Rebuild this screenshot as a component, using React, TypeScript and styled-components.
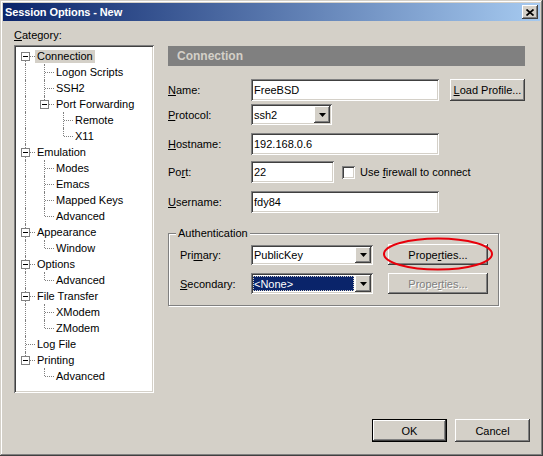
import React from "react"
import styled, { createGlobalStyle, css } from "styled-components"

const GlobalStyle = createGlobalStyle`
  html, body {
    margin: 0;
    padding: 0;
    background: #d4d0c8;
  }
  body {
    font-family: "Liberation Sans", Arial, sans-serif;
    font-size: 11px;
    color: #000;
  }
  * {
    box-sizing: border-box;
  }
`

// classic bevels
const raised = css`
  box-shadow: inset -1px -1px #404040, inset 1px 1px #ffffff, inset -2px -2px #808080,
    inset 2px 2px #d4d0c8;
`
const sunken = css`
  box-shadow: inset 1px 1px #808080, inset -1px -1px #ffffff, inset 2px 2px #404040,
    inset -2px -2px #d4d0c8;
`

const Window = styled.div`
  width: 543px;
  height: 456px;
  padding: 3px;
  background: #d4d0c8;
  display: flex;
  flex-direction: column;
  box-shadow: inset -1px -1px #404040, inset 1px 1px #d4d0c8, inset -2px -2px #808080,
    inset 2px 2px #ffffff;
`

const TitleBar = styled.div`
  height: 18px;
  display: flex;
  align-items: center;
  justify-content: space-between;
  padding: 0 2px 0 2px;
  background: linear-gradient(to right, #0a246a, #a6caf0);
`

const Title = styled.span`
  color: #fff;
  font-weight: 700;
  font-size: 11px;
  letter-spacing: -0.1px;
`

const CloseButton = styled.div`
  width: 16px;
  height: 14px;
  background: #d4d0c8;
  display: flex;
  align-items: center;
  justify-content: center;
  ${raised};
`

const Body = styled.div`
  flex: 1;
  display: flex;
  flex-direction: column;
  padding: 8px 10px 0 11px;
`

const Main = styled.div`
  display: flex;
  gap: 14px;
  height: 364px;
`

const LeftColumn = styled.div`
  width: 140px;
  display: flex;
  flex-direction: column;
`

const CategoryLabel = styled.div`
  height: 13px;
  line-height: 13px;
  margin-bottom: 3px;
`

const Key = styled.span`
  text-decoration: underline;
`

const TreeBox = styled.div`
  height: 348px;
  background: #fff;
  padding: 3px 0 0 2px;
  ${sunken};
`

const TreeRow = styled.div`
  display: flex;
  align-items: center;
  height: 16px;
`

const Guide = styled.div<{ $line: boolean }>`
  width: 19px;
  height: 16px;
  position: relative;
  flex: none;
  ${(p) =>
    p.$line &&
    css`
      &::before {
        content: "";
        position: absolute;
        left: 9px;
        top: 0;
        bottom: 0;
        border-left: 1px dotted #808080;
      }
    `}
`

const Connector = styled.div<{ $up: boolean; $down: boolean }>`
  width: 19px;
  height: 16px;
  position: relative;
  flex: none;
  &::before {
    content: "";
    position: absolute;
    left: 9px;
    top: ${(p) => (p.$up ? "0" : "8px")};
    bottom: ${(p) => (p.$down ? "0" : "8px")};
    border-left: 1px dotted #808080;
  }
  &::after {
    content: "";
    position: absolute;
    left: 10px;
    top: 8px;
    width: 9px;
    border-top: 1px dotted #808080;
  }
`

const Expander = styled.div`
  position: absolute;
  left: 5px;
  top: 4px;
  width: 9px;
  height: 9px;
  border: 1px solid #808080;
  background: #fff;
  z-index: 1;
  &::after {
    content: "";
    position: absolute;
    left: 1px;
    top: 3px;
    width: 5px;
    border-top: 1px solid #000;
  }
`

const NodeLabel = styled.span<{ $selected?: boolean }>`
  height: 13px;
  line-height: 13px;
  padding: 0 2px;
  white-space: nowrap;
  background: ${(p) => (p.$selected ? "#d4d0c8" : "transparent")};
`

const RightColumn = styled.div`
  width: 357px;
  padding-top: 17px;
  display: flex;
  flex-direction: column;
`

const PanelHeader = styled.div`
  height: 20px;
  background: #808080;
  color: #d4d0c8;
  font-weight: 700;
  font-size: 12px;
  padding-left: 9px;
  display: flex;
  align-items: center;
`

const FormRow = styled.div<{ $top: number }>`
  display: flex;
  align-items: center;
  margin-top: ${(p) => p.$top}px;
`

const FieldLabel = styled.div<{ $w: number }>`
  width: ${(p) => p.$w}px;
  flex: none;
`

const TextField = styled.div<{ $w: number }>`
  width: ${(p) => p.$w}px;
  height: 22px;
  background: #fff;
  padding-left: 3px;
  display: flex;
  align-items: center;
  ${sunken};
`

const Combo = styled.div<{ $w: number; $h: number }>`
  width: ${(p) => p.$w}px;
  height: ${(p) => p.$h}px;
  background: #fff;
  padding: 2px;
  display: flex;
  ${sunken};
`

const ComboText = styled.div<{ $selected?: boolean }>`
  flex: 1;
  display: flex;
  align-items: center;
  padding-left: 1px;
  margin: 1px 1px 1px 0;
  ${(p) =>
    p.$selected &&
    css`
      background: #0a246a;
      color: #fff;
      outline: 1px dotted #d4d0c8;
      outline-offset: -1px;
    `}
`

const ComboArrow = styled.div`
  width: 16px;
  flex: none;
  background: #d4d0c8;
  display: flex;
  align-items: center;
  justify-content: center;
  ${raised};
`

const Button = styled.div<{ $w: number; $h: number; $default?: boolean; $disabled?: boolean }>`
  position: relative;
  width: ${(p) => p.$w}px;
  height: ${(p) => p.$h}px;
  flex: none;
  background: #d4d0c8;
  display: flex;
  align-items: center;
  justify-content: center;
  ${(p) =>
    p.$default
      ? css`
          border: 1px solid #000;
          box-shadow: inset -1px -1px #404040, inset 1px 1px #ffffff, inset -2px -2px #808080;
        `
      : raised};
  ${(p) =>
    p.$disabled &&
    css`
      color: #808080;
      text-shadow: 1px 1px 0 #fff;
    `}
`

const Checkbox = styled.div`
  width: 13px;
  height: 13px;
  flex: none;
  background: #fff;
  margin: 0 5px 0 8px;
  ${sunken};
`

const Group = styled.div`
  position: relative;
  width: 331px;
  height: 73px;
  margin-top: 20px;
  padding: 10px 0 0 11px;
  border: 1px solid #808080;
  box-shadow: 1px 1px 0 #fff, inset 1px 1px 0 #fff;
`

const Legend = styled.span`
  position: absolute;
  left: 7px;
  top: -7px;
  padding: 0 2px;
  line-height: 13px;
  background: #d4d0c8;
`

const Highlight = styled.svg`
  position: absolute;
  left: -6px;
  top: -7px;
  pointer-events: none;
`

const Footer = styled.div`
  display: flex;
  justify-content: flex-end;
  gap: 8px;
  margin-top: 26px;
`

type TreeNode = { label: string; selected?: boolean; children?: TreeNode[] }

const tree: TreeNode[] = [
  {
    label: "Connection",
    selected: true,
    children: [
      { label: "Logon Scripts" },
      { label: "SSH2" },
      { label: "Port Forwarding", children: [{ label: "Remote" }, { label: "X11" }] },
    ],
  },
  {
    label: "Emulation",
    children: [{ label: "Modes" }, { label: "Emacs" }, { label: "Mapped Keys" }, { label: "Advanced" }],
  },
  { label: "Appearance", children: [{ label: "Window" }] },
  { label: "Options", children: [{ label: "Advanced" }] },
  { label: "File Transfer", children: [{ label: "XModem" }, { label: "ZModem" }] },
  { label: "Log File" },
  { label: "Printing", children: [{ label: "Advanced" }] },
]

type FlatNode = {
  label: string
  selected?: boolean
  guides: boolean[]
  first: boolean
  last: boolean
  expandable: boolean
}

const flatten = (nodes: TreeNode[], depth: number, guides: boolean[], out: FlatNode[]) => {
  nodes.forEach((n, i) => {
    const last = i === nodes.length - 1
    out.push({
      label: n.label,
      selected: n.selected,
      guides,
      first: depth === 0 && i === 0,
      last,
      expandable: !!n.children,
    })
    if (n.children) flatten(n.children, depth + 1, [...guides, !last], out)
  })
  return out
}

const rows = flatten(tree, 0, [], [])

const Arrow = () => (
  <svg width="7" height="4" viewBox="0 0 7 4">
    <polygon points="0,0 7,0 3.5,4" fill="#000" />
  </svg>
)

const DropDown = ({ w, h, value, selected }: { w: number; h: number; value: string; selected?: boolean }) => (
  <Combo $w={w} $h={h}>
    <ComboText $selected={selected}>{value}</ComboText>
    <ComboArrow>
      <Arrow />
    </ComboArrow>
  </Combo>
)

const App = () => {
  return (
    <>
      <GlobalStyle />
      <Window>
        <TitleBar>
          <Title>Session Options - New</Title>
          <CloseButton>
            <svg width="8" height="7" viewBox="0 0 8 7">
              <path d="M0.5 0.5 L7.5 6.5 M7.5 0.5 L0.5 6.5" stroke="#000" strokeWidth="1.7" />
            </svg>
          </CloseButton>
        </TitleBar>
        <Body>
          <Main>
            <LeftColumn>
              <CategoryLabel>
                <Key>C</Key>ategory:
              </CategoryLabel>
              <TreeBox>
                {rows.map((r, i) => (
                  <TreeRow key={i}>
                    {r.guides.map((g, j) => (
                      <Guide key={j} $line={g} />
                    ))}
                    <Connector $up={!r.first} $down={!r.last}>
                      {r.expandable && <Expander />}
                    </Connector>
                    <NodeLabel $selected={r.selected}>{r.label}</NodeLabel>
                  </TreeRow>
                ))}
              </TreeBox>
            </LeftColumn>

            <RightColumn>
              <PanelHeader>Connection</PanelHeader>

              <FormRow $top={13}>
                <FieldLabel $w={83}>
                  <Key>N</Key>ame:
                </FieldLabel>
                <TextField $w={188}>FreeBSD</TextField>
                <Button $w={75} $h={22} style={{ marginLeft: 11 }}>
                  <Key>L</Key>oad Profile...
                </Button>
              </FormRow>

              <FormRow $top={3}>
                <FieldLabel $w={83}>
                  <Key>P</Key>rotocol:
                </FieldLabel>
                <DropDown w={81} h={21} value="ssh2" />
              </FormRow>

              <FormRow $top={8}>
                <FieldLabel $w={83}>
                  <Key>H</Key>ostname:
                </FieldLabel>
                <TextField $w={188}>192.168.0.6</TextField>
              </FormRow>

              <FormRow $top={6}>
                <FieldLabel $w={83}>
                  Po<Key>r</Key>t:
                </FieldLabel>
                <TextField $w={83}>22</TextField>
                <Checkbox />
                <span>
                  Use <Key>f</Key>irewall to connect
                </span>
              </FormRow>

              <FormRow $top={8}>
                <FieldLabel $w={83}>
                  <Key>U</Key>sername:
                </FieldLabel>
                <TextField $w={188}>fdy84</TextField>
              </FormRow>

              <Group>
                <Legend>Authentication</Legend>
                <FormRow $top={0}>
                  <FieldLabel $w={71}>
                    Pri<Key>m</Key>ary:
                  </FieldLabel>
                  <DropDown w={122} h={20} value="PublicKey" />
                  <Button $w={100} $h={21} style={{ marginLeft: 15 }}>
                    Prope<Key>r</Key>ties...
                    <Highlight width="112" height="34" viewBox="0 0 112 34">
                      <ellipse cx="56" cy="17" rx="54" ry="15.5" fill="none" stroke="#e8000b" strokeWidth="2" />
                    </Highlight>
                  </Button>
                </FormRow>
                <FormRow $top={8}>
                  <FieldLabel $w={71}>
                    <Key>S</Key>econdary:
                  </FieldLabel>
                  <DropDown w={122} h={21} value="<None>" selected />
                  <Button $w={100} $h={21} $disabled style={{ marginLeft: 15 }}>
                    Prope<Key>r</Key>ties...
                  </Button>
                </FormRow>
              </Group>
            </RightColumn>
          </Main>

          <Footer>
            <Button $w={75} $h={23} $default>
              OK
            </Button>
            <Button $w={75} $h={23}>
              Cancel
            </Button>
          </Footer>
        </Body>
      </Window>
    </>
  )
}

export default App
